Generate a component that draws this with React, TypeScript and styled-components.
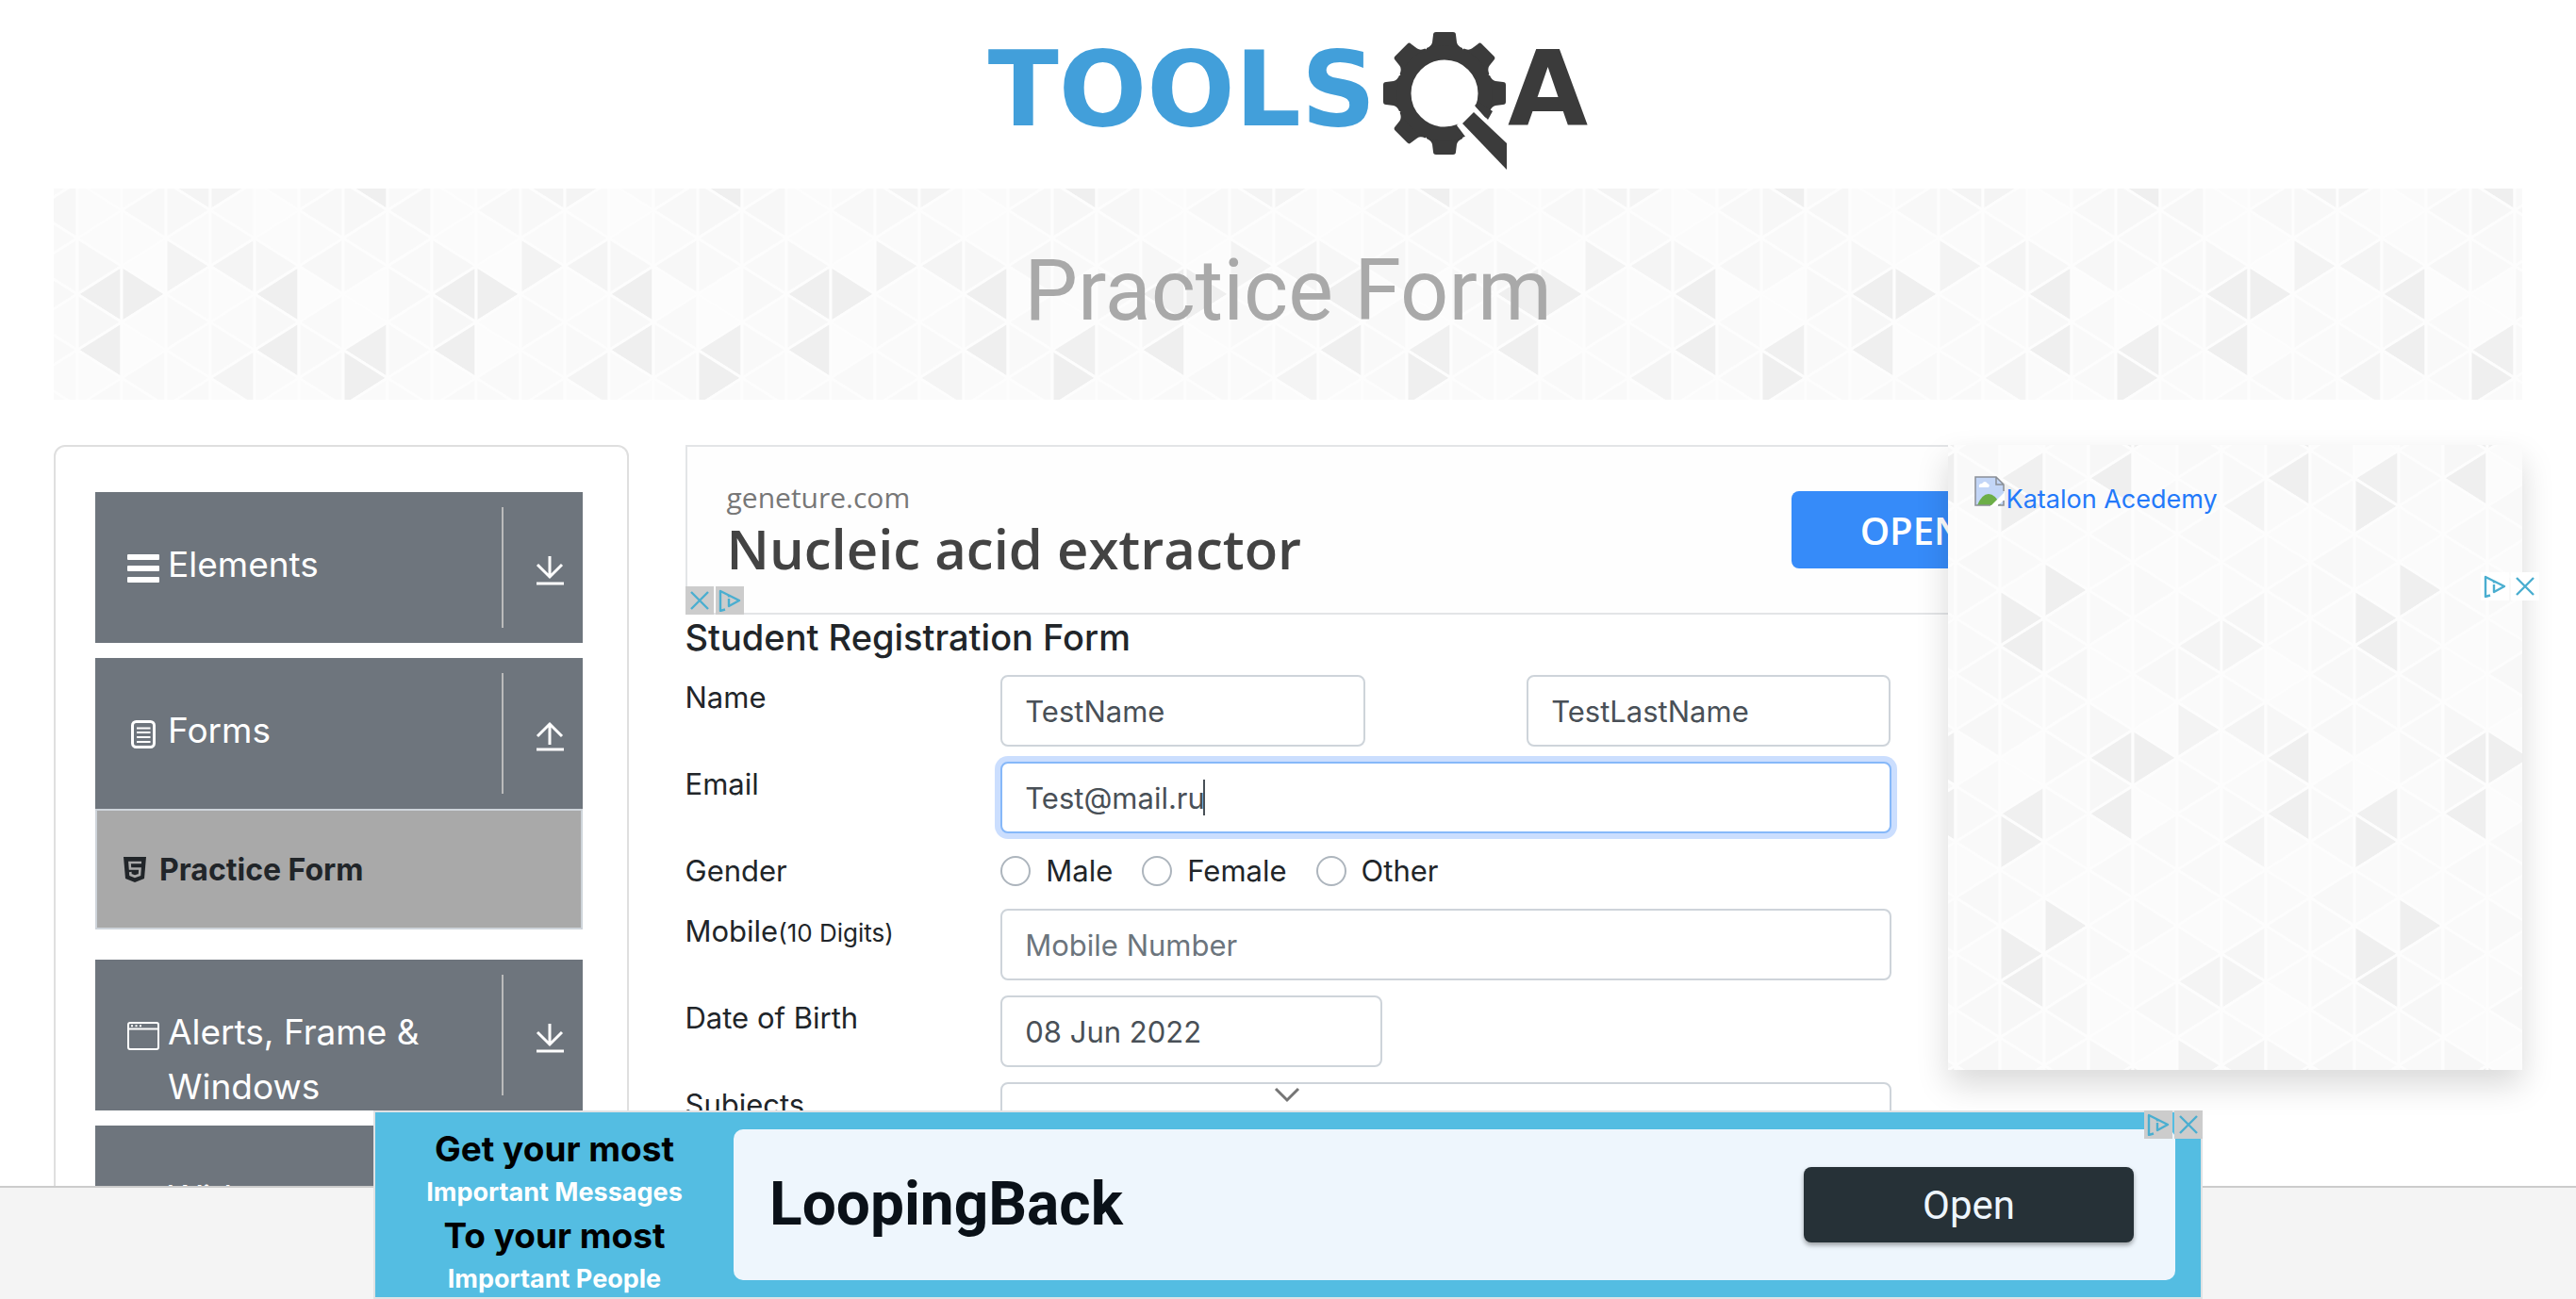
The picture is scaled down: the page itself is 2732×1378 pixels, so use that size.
import React from "react";
import styled, { createGlobalStyle, css } from "styled-components";

const UI = `Inter, "Liberation Sans", sans-serif`;
const SLATE = "#6e757d";
const SKY = "#54bde2";

/* ---------- triangle mosaic background ---------- */

const STEP_X = 47;
const STEP_Y = 356 / 12;

// One row per vertical strip, one shade per triangle from top to bottom.
const SHADES = [
  ["fa", "f9", "fb", "fb", "fb", "f7", "ef", "f7", "ef", "fb", "f9", "fa"],
  ["f9", "fb", "fa", "f8", "fb", "fc", "ef", "fb", "fc", "f9", "fa", "fb"],
  ["fb", "f9", "f4", "f8", "fa", "f3", "fa", "f9", "fa", "fa", "f9", "fa"],
  ["fa", "f6", "f4", "fa", "f9", "f4", "fb", "fa", "f9", "f4", "fb", "f9"],
  ["f9", "fa", "fa", "fc", "fb", "f7", "ef", "f8", "ef", "fa", "fb", "fa"],
  ["f9", "fa", "f9", "f8", "fa", "f7", "fc", "f9", "f9", "f9", "fb", "f8"],
  ["fb", "ef", "ef", "f7", "f9", "f9", "fc", "fc", "f0", "ef", "fa", "f9"],
  ["ef", "f9", "f9", "f7", "f9", "f9", "f8", "fa", "f9", "fa", "fa", "fb"],
];

function mosaicTile() {
  const cells: string[] = [];
  for (let k = -1; k <= 8; k++) {
    const left = 32 + STEP_X * k;
    const right = left + STEP_X;
    for (let j = -7; j <= 7; j++) {
      const shade = SHADES[(k + 8) % 8][(j + 18) % 12];
      const y = 178 + STEP_Y * j;
      const pointsLeft = (j + k) % 2 === 0;
      const apex = pointsLeft ? left : right;
      const base = pointsLeft ? right : left;
      cells.push(
        `<path d="M${apex} ${y.toFixed(1)}L${base} ${(y - STEP_Y).toFixed(1)}V${(y + STEP_Y).toFixed(1)}Z" fill="#${shade.repeat(3)}"/>`
      );
    }
  }
  const svg = `<svg xmlns="http://www.w3.org/2000/svg" width="376" height="356" viewBox="0 0 376 356"><g stroke="#fdfdfd" stroke-width="3" stroke-linejoin="round">${cells.join("")}</g></svg>`;
  return `url("data:image/svg+xml,${encodeURIComponent(svg)}")`;
}

const mosaic = css`
  background: #fafafa ${mosaicTile()} center / 376px 356px repeat;
`;

/* ---------- page frame ---------- */

const GlobalStyle = createGlobalStyle`
  *, *::before, *::after { box-sizing: border-box; }
  body { margin: 0; background: #fff; color: #212529; font-family: ${UI}; }
  button, input { font-family: inherit; }
`;

const Shell = styled.div`
  display: flex;
  flex-direction: column;
  height: 100vh;
  overflow: hidden;
`;

const Scroller = styled.div`
  flex: 1;
  min-height: 0;
  overflow: hidden;
  padding: 0 57px;
`;

const PageFooter = styled.footer`
  flex: none;
  height: 120px;
  background: #f4f4f4;
  border-top: 2px solid #ccc;
`;

/* ---------- logo and banner ---------- */

const TopBar = styled.header`
  display: flex;
  justify-content: center;
  height: 200px;
  padding-top: 34px;
`;

const LogoLink = styled.a`
  display: flex;
  align-items: flex-start;
  height: 146px;
  color: #3b3b3b;
  font: bold 110px/122px "DejaVu Sans", sans-serif;
  text-decoration: none;

  svg {
    margin-left: 6px;
  }
`;

const LogoBlue = styled.span`
  color: #429fda;
`;

const Banner = styled.div`
  ${mosaic}
  padding: 52px 0 58px;
  color: #a9a9a9;
  font-size: 90px;
  font-family: Roboto, "Liberation Sans", sans-serif;
  font-weight: 400;
  line-height: 114px;
  text-align: center;
`;

const Columns = styled.div`
  display: grid;
  grid-template-columns: repeat(12, minmax(0, 1fr));
  column-gap: 60px;
  margin-top: 48px;
`;

/* ---------- left menu ---------- */

const Sidebar = styled.nav`
  grid-column: span 3;
  padding: 48px 47px 48px 42px;
  border: 2px solid #dfdfdf;
  border-radius: 12px;
`;

const MenuGroup = styled.div<{ $open?: boolean }>`
  margin-bottom: ${(p) => (p.$open ? 32 : 16)}px;
`;

const MenuHead = styled.button`
  display: flex;
  align-items: stretch;
  width: 100%;
  height: 160px;
  padding: 16px 20px 16px 34px;
  border: 0;
  background: ${SLATE};
  color: #fff;
  font-size: 37px;
  line-height: 58px;
  text-align: left;
`;

const MenuIcon = styled.span`
  display: flex;
  justify-content: center;
  width: 34px;
  margin-right: 9px;
  padding-top: 49px;
`;

const MenuLabel = styled.span`
  flex: 1;
  padding-top: 32px;
`;

const MenuArrow = styled.span`
  display: flex;
  align-items: flex-start;
  justify-content: flex-end;
  width: 66px;
  padding-top: 51px;
  border-left: 2px solid #bbb;
`;

const SubItem = styled.a`
  display: flex;
  align-items: center;
  gap: 14px;
  height: 128px;
  padding-left: 28px;
  border: 2px solid #ced4da;
  background: #a9a9a9;
  color: #212529;
  font-size: 32px;
  font-weight: 700;
  text-decoration: none;
`;

/* ---------- middle column ---------- */

const Content = styled.main`
  grid-column: span 6;
`;

const TopAd = styled.section`
  position: relative;
  display: flex;
  align-items: center;
  justify-content: space-between;
  width: 1456px;
  height: 180px;
  padding: 0 25px 0 42px;
  border: 2px solid #e3e5e7;
  background: #fefefe;
  font-family: "Open Sans", sans-serif;
`;

const AdCopy = styled.div`
  display: flex;
  flex-direction: column;
`;

const AdDomain = styled.a`
  color: #777;
  font-size: 30px;
  line-height: 40px;
  text-decoration: none;
`;

const AdTitle = styled.strong`
  color: #434343;
  font-size: 58px;
  font-weight: 600;
  line-height: 68px;
`;

const AdButton = styled.button`
  width: 256px;
  height: 82px;
  border: 0;
  border-radius: 8px;
  background: #368bf9;
  color: #fff;
  font-size: 40px;
  font-weight: 600;
`;

const Badges = styled.div<{ $place: "bottomLeft" | "topRight" | "overEdge" }>`
  position: absolute;
  display: flex;
  gap: 2px;
  ${(p) => p.$place === "bottomLeft" && "left: -2px; bottom: -2px;"}
  ${(p) => p.$place === "topRight" && "right: -2px; top: -2px;"}
  ${(p) => p.$place === "overEdge" && "right: -18px; top: 135px;"}
`;

const BadgeButton = styled.button<{ $plain?: boolean }>`
  display: flex;
  align-items: center;
  justify-content: center;
  width: 30px;
  height: 30px;
  padding: 0;
  border: 0;
  background: ${(p) => (p.$plain ? "#fff" : "#ccc")};
`;

const FormTitle = styled.h1`
  margin: 0 0 16px;
  font-size: 38px;
  font-weight: 500;
  line-height: 48px;
`;

const FormRow = styled.div`
  display: grid;
  grid-template-columns: repeat(12, minmax(0, 1fr));
  column-gap: 60px;
  margin-bottom: 16px;
`;

const Label = styled.label`
  grid-column: span 3;
  font-size: 31px;
  line-height: 48px;
  white-space: nowrap;

  small {
    font-size: 26px;
  }
`;

const GroupLabel = styled(Label).attrs({ as: "span" })``;

const Field = styled.div<{ $from?: number; $span: number }>`
  position: relative;
  grid-column: ${(p) => p.$from ?? 4} / span ${(p) => p.$span};
`;

const TextInput = styled.input<{ $active?: boolean; $short?: boolean }>`
  display: block;
  width: ${(p) => (p.$short ? "405px" : "100%")};
  height: 76px;
  padding: 0 24px;
  border: 2px solid ${(p) => (p.$active ? "#86b8f9" : "#ced4da")};
  border-radius: 8px;
  outline: 0;
  background: #fff;
  box-shadow: ${(p) => (p.$active ? "0 0 0 6px #cbdefe" : "none")};
  color: #495057;
  font-size: 31px;

  &::placeholder {
    color: #6c757d;
    opacity: 1;
  }
`;

const Caret = styled.span`
  position: absolute;
  top: 19px;
  left: 215px;
  width: 2px;
  height: 38px;
  background: #495057;
`;

const RadioGroup = styled.div`
  display: flex;
  grid-column: span 9;
  gap: 31px;
  height: 48px;
`;

const RadioLabel = styled.label`
  display: flex;
  align-items: center;
  gap: 16px;
  font-size: 31px;
  line-height: 48px;
`;

const Radio = styled.input`
  appearance: none;
  width: 32px;
  height: 32px;
  margin: 0;
  border: 2px solid #adb5bd;
  border-radius: 50%;
  background: #fff;
`;

/* ---------- right column ---------- */

const Promo = styled.aside`
  ${mosaic}
  position: relative;
  grid-column: span 3;
  align-self: start;
  min-height: 663px;
  padding: 33px 28px;
  box-shadow: 0 16px 32px rgba(0, 0, 0, 0.15);
`;

const PromoLink = styled.a`
  display: flex;
  align-items: flex-start;
  gap: 2px;
  color: #2379fa;
  font-size: 27px;
  line-height: 50px;
  text-decoration: none;
`;

/* ---------- bottom ad ---------- */

const BottomAd = styled.section`
  position: fixed;
  bottom: 0;
  left: 50%;
  display: flex;
  align-items: center;
  width: 1940px;
  height: 200px;
  padding-right: 27px;
  border: 2px solid #e0e2e4;
  background: ${SKY};
  transform: translateX(-50%);
`;

const Collapse = styled.button`
  position: absolute;
  top: -28px;
  left: 50%;
  display: flex;
  margin-left: -15px;
  padding: 0;
  border: 0;
  background: none;
`;

const Pitch = styled.div`
  width: 380px;
  padding-top: 20px;
  color: #000;
  font-size: 37px;
  font-weight: 700;
  line-height: 46px;
  text-align: center;

  span {
    display: block;
    color: #fff;
    font-size: 27px;
  }
`;

const AdPanel = styled.div`
  display: flex;
  flex: 1;
  align-items: center;
  justify-content: space-between;
  height: 160px;
  padding: 0 44px 0 38px;
  border-radius: 10px;
  background: #eef6fd;
  color: #0a1118;
  font: 700 64px/80px Roboto, sans-serif;
`;

const OpenButton = styled.button`
  width: 350px;
  height: 80px;
  border: 0;
  border-radius: 8px;
  background: #263137;
  box-shadow: 0 3px 5px rgba(0, 0, 0, 0.35);
  color: #eef6fd;
  font: 400 42px/80px Roboto, sans-serif;
`;

/* ---------- drawings ---------- */

const Gear = () => (
  <svg width="134" height="146" viewBox="0 0 134 146" aria-hidden="true">
    <g fill="#3b3b3b">
      {[0, 45, 90, 180, 225, 270, 315].map((a) => (
        <path
          key={a}
          transform={`rotate(${a} 67 65)`}
          d="M55 3Q55 0 58 0H76Q79 0 79 3L80 11Q81 15 86 17V26H48V17Q53 15 54 11Z"
        />
      ))}
      <circle cx="67" cy="65" r="43" fill="#fff" stroke="#3b3b3b" strokeWidth="15" />
      <path d="M99 78 132 115 102 128 80 99 88 88Z" fill="#fff" />
      <path d="M99 78 103 74 118 84 113 93Z" />
      <path d="M98 85 133 118V146L86 97Z" />
    </g>
  </svg>
);

const Bars = () => (
  <svg width="34" height="32" viewBox="0 0 34 32" fill="#fff">
    {[1, 13, 25].map((y) => (
      <rect key={y} y={y} width="34" height="6" rx="1" />
    ))}
  </svg>
);

const Sheet = () => (
  <svg width="26" height="32" viewBox="0 0 26 32" fill="none" stroke="#fff">
    <rect x="1.5" y="2.5" width="23" height="27" rx="4" strokeWidth="3" />
    <path d="M6 9.500H20.500M6 14H20.500M6 19H20.500M6 24H20.500" strokeWidth="1.800" />
  </svg>
);

const WindowIcon = () => (
  <svg width="34" height="32" viewBox="0 0 34 32" fill="none" stroke="#fff" strokeWidth="2">
    <rect x="1" y="2" width="32" height="28" rx="2" />
    <path d="M1 8.500H33" />
    <path d="M4 5.200H6M8.500 5.200H10.500M13 5.200H15" />
  </svg>
);

const Arrow = ({ up }: { up?: boolean }) => (
  <svg width="30" height="32" viewBox="0 0 30 32" fill="none" stroke="#fff" strokeWidth="3">
    <path d={up ? "M15 25V3M2 16 15 3 28 16" : "M15 1V23M2 10 15 23 28 10"} />
    <path d="M1 30H30" />
  </svg>
);

const Shield = () => (
  <svg width="24" height="27" viewBox="0 0 24 27" fill="none">
    <path d="M0 0H24L22 23 12 27 2 23Z" fill="#212529" />
    <path d="M19 6H6.500L7 12.500H17.500L17 19 12 20.800 7.500 19 7.200 16" stroke="#a9a9a9" strokeWidth="2.600" />
  </svg>
);

const AdChoices = () => (
  <svg width="24" height="24" viewBox="0 0 24 24" fill="none" stroke="#4aaed0" strokeWidth="2.400" strokeLinejoin="round">
    <path d="M7 21.500 2 23V2L22 12 11 18V10" />
    <path d="M11 6.500V8.500" />
  </svg>
);

const Cross = () => (
  <svg width="20" height="20" viewBox="0 0 20 20" fill="none" stroke="#4aaed0" strokeWidth="2.400">
    <path d="M1 1 19 19M19 1 1 19" />
  </svg>
);

const MissingImage = () => (
  <svg width="32" height="32" viewBox="0 0 32 32">
    <path d="M1 1H23L31 9V31H1Z" fill="#c3d6f7" />
    <path d="M3 31Q8 19 15 19 22 19 28 31Z" fill="#6cae47" />
    <path d="M5 12Q4 8 8 8 11 4 14 8 17 9 15 12Z" fill="#fff" />
    <path d="M17 32 32 17V25L24 32Z" fill="#fff" />
    <path d="M31 16V9L23 1H1V31H17M31 26V31H25M23 1V9H31" fill="none" stroke="#8a8f96" strokeWidth="1.500" />
  </svg>
);

/* ---------- parts ---------- */

function AdBadges({ place, plain, closeFirst }: { place: "bottomLeft" | "topRight" | "overEdge"; plain?: boolean; closeFirst?: boolean }) {
  const info = (
    <BadgeButton key="info" type="button" aria-label="AdChoices" $plain={plain}>
      <AdChoices />
    </BadgeButton>
  );
  const close = (
    <BadgeButton key="close" type="button" aria-label="Close ad" $plain={plain}>
      <Cross />
    </BadgeButton>
  );
  return <Badges $place={place}>{closeFirst ? [close, info] : [info, close]}</Badges>;
}

function Menu({ icon, label, open, children }: { icon?: React.ReactNode; label: string; open?: boolean; children?: React.ReactNode }) {
  return (
    <MenuGroup $open={open}>
      <MenuHead type="button" aria-expanded={!!open}>
        <MenuIcon>{icon}</MenuIcon>
        <MenuLabel>{label}</MenuLabel>
        <MenuArrow>
          <Arrow up={open} />
        </MenuArrow>
      </MenuHead>
      {children}
    </MenuGroup>
  );
}

export default function App() {
  return (
    <Shell>
      <GlobalStyle />
      <Scroller>
        <TopBar>
          <LogoLink href="#" aria-label="TOOLSQA">
            <LogoBlue>TOOLS</LogoBlue>
            <Gear />
            <span>A</span>
          </LogoLink>
        </TopBar>
        <Banner>Practice Form</Banner>

        <Columns>
          <Sidebar>
            <Menu icon={<Bars />} label="Elements" />
            <Menu icon={<Sheet />} label="Forms" open>
              <SubItem href="#">
                <Shield />
                Practice Form
              </SubItem>
            </Menu>
            <Menu icon={<WindowIcon />} label="Alerts, Frame & Windows" />
            <Menu label="Widgets" />
          </Sidebar>

          <Content>
            <TopAd>
              <AdCopy>
                <AdDomain href="#">geneture.com</AdDomain>
                <AdTitle>Nucleic acid extractor</AdTitle>
              </AdCopy>
              <AdButton type="button">OPEN</AdButton>
              <AdBadges place="bottomLeft" closeFirst />
            </TopAd>

            <form>
              <FormTitle>Student Registration Form</FormTitle>
              <FormRow>
                <Label htmlFor="firstName">Name</Label>
                <Field $span={4}>
                  <TextInput id="firstName" defaultValue="TestName" />
                </Field>
                <Field $from={9} $span={4}>
                  <TextInput aria-label="Last Name" defaultValue="TestLastName" />
                </Field>
              </FormRow>
              <FormRow>
                <Label htmlFor="email">Email</Label>
                <Field $span={9}>
                  <TextInput id="email" $active defaultValue="Test@mail.ru" />
                  <Caret />
                </Field>
              </FormRow>
              <FormRow role="radiogroup" aria-labelledby="gender">
                <GroupLabel id="gender">Gender</GroupLabel>
                <RadioGroup>
                  {["Male", "Female", "Other"].map((g) => (
                    <RadioLabel key={g}>
                      <Radio type="radio" name="gender" value={g} />
                      {g}
                    </RadioLabel>
                  ))}
                </RadioGroup>
              </FormRow>
              <FormRow>
                <Label htmlFor="mobile">
                  Mobile<small>(10 Digits)</small>
                </Label>
                <Field $span={9}>
                  <TextInput id="mobile" placeholder="Mobile Number" />
                </Field>
              </FormRow>
              <FormRow>
                <Label htmlFor="birth">Date of Birth</Label>
                <Field $span={9}>
                  <TextInput id="birth" $short defaultValue="08 Jun 2022" />
                </Field>
              </FormRow>
              <FormRow>
                <Label htmlFor="subjects">Subjects</Label>
                <Field $span={9}>
                  <TextInput id="subjects" />
                </Field>
              </FormRow>
            </form>
          </Content>

          <Promo>
            <PromoLink href="#">
              <MissingImage />
              Katalon Acedemy
            </PromoLink>
            <AdBadges place="overEdge" plain />
          </Promo>
        </Columns>
      </Scroller>
      <PageFooter />

      <BottomAd>
        <Collapse type="button" aria-label="Collapse ad">
          <svg width="28" height="18" viewBox="0 0 28 18" fill="none" stroke="#757575" strokeWidth="3">
            <path d="M2 3 14 15 26 3" />
          </svg>
        </Collapse>
        <Pitch>
          Get your most
          <span>Important Messages</span>
          To your most
          <span>Important People</span>
        </Pitch>
        <AdPanel>
          LoopingBack
          <OpenButton type="button">Open</OpenButton>
        </AdPanel>
        <AdBadges place="topRight" />
      </BottomAd>
    </Shell>
  );
}
